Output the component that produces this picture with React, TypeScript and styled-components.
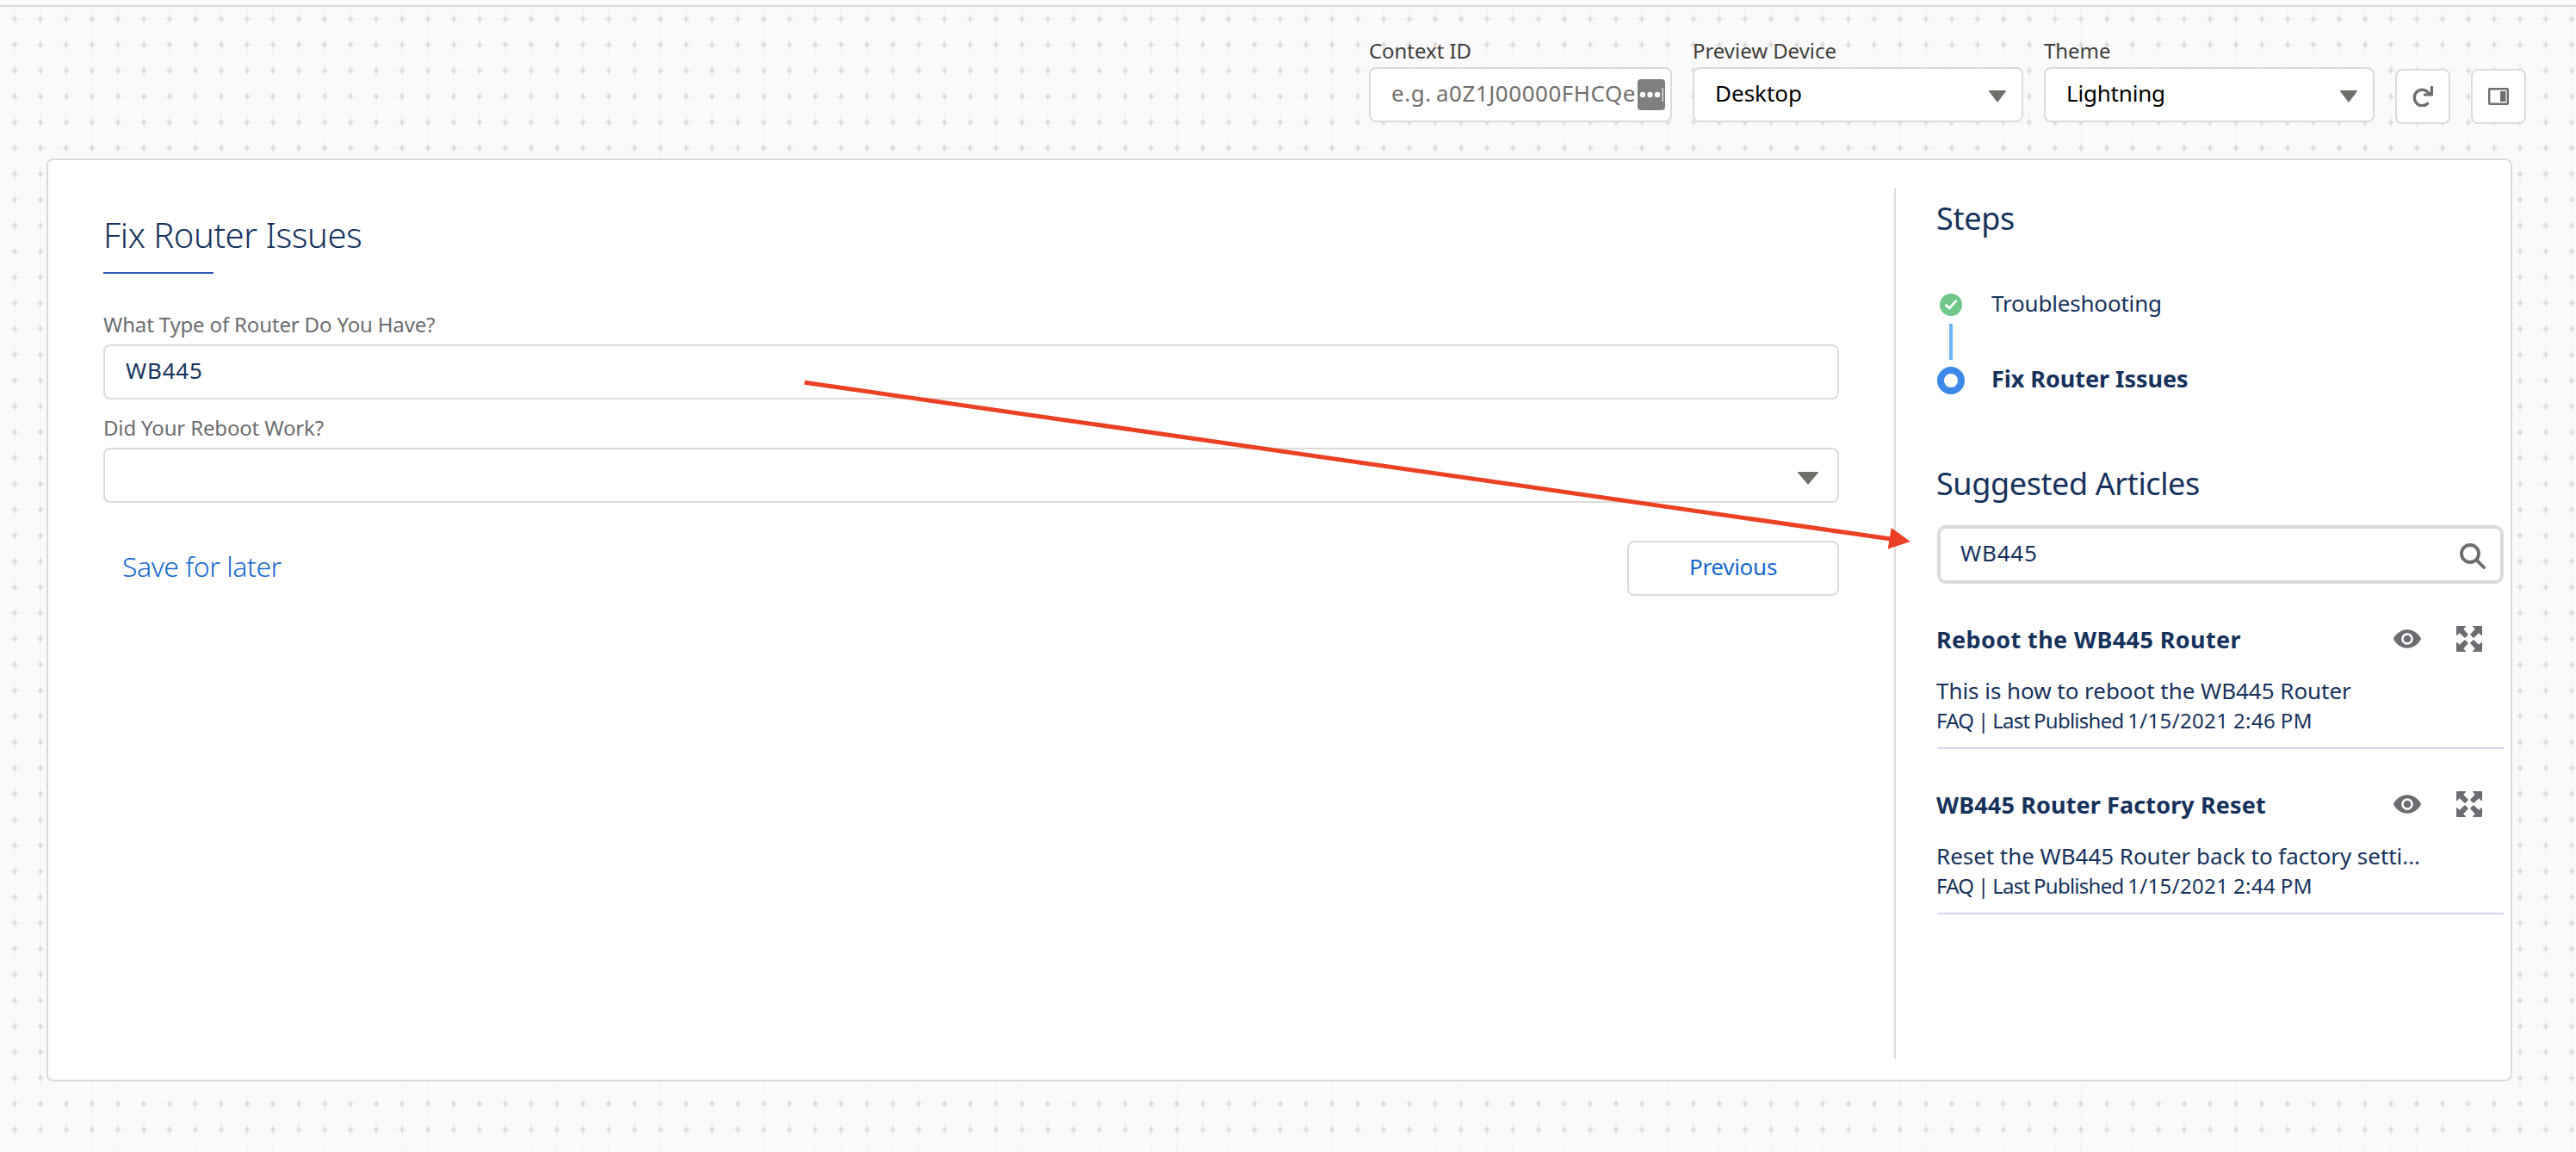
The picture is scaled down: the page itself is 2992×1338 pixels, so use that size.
import styled, { createGlobalStyle } from "styled-components";

const GlobalStyle = createGlobalStyle`
    * {
        box-sizing: border-box;
    }
    body {
        margin: 0;
        font-family: "Noto Sans", "Open Sans", sans-serif;
        color: #16325c;
    }
    h1, h2, h3, p, ul {
        margin: 0;
        padding: 0;
        font-weight: 400;
    }
    svg {
        display: block;
        flex-shrink: 0;
    }
`;

const Page = styled.div`
    position: relative;
    width: 2992px;
    height: 1338px;
    overflow: hidden;
    background-color: #fafafa;
    background-image:
        radial-gradient(ellipse 2.2px 5.5px at 17px 22px, #dadada 25%, transparent),
        radial-gradient(ellipse 5px 2.4px at 17px 22px, #e3e3e3 30%, transparent),
        linear-gradient(90deg, transparent 16px, #f7f7f7 16px, #f7f7f7 18px, transparent 18px),
        linear-gradient(transparent 21px, #f8f8f8 21px, #f8f8f8 23px, transparent 23px);
    background-size: 30px 30px;
`;

const TopStrip = styled.div`
    height: 8px;
    background: #fafaf9;
    border-bottom: 2px solid #dddbda;
`;

const Toolbar = styled.div`
    display: flex;
    justify-content: flex-end;
    align-items: flex-start;
    gap: 24px;
    height: 136px;
    padding: 32px 58px 0 0;
`;

const ToolbarField = styled.div<{ $width: number }>`
    width: ${props => props.$width}px;
`;

const ToolbarLabel = styled.div`
    font-size: 24px;
    line-height: 38px;
    letter-spacing: -0.05px;
    color: #3e3e3c;
    white-space: nowrap;
`;

const Control = styled.div<{ $color?: string; $tracking?: number; $right?: number }>`
    display: flex;
    align-items: center;
    justify-content: space-between;
    height: 64px;
    padding: 0 ${props => props.$right ?? 18}px 4px 24px;
    background: #fff;
    border: 2px solid #dddbda;
    border-radius: 8px;
    font-size: 26px;
    letter-spacing: ${props => props.$tracking ?? 0}px;
    color: ${props => props.$color ?? "#16325c"};
    white-space: nowrap;
`;

const Placeholder = styled.span`
    letter-spacing: 0.52px;
    word-spacing: -2px;
`;

const Caret = styled.svg<{ $drop: number }>`
    margin-top: ${props => props.$drop}px;
    margin-left: auto;
    fill: #706e6b;
`;

const MoreBadge = styled.svg`
    margin-top: 4px;
`;

const IconButton = styled.button`
    display: flex;
    align-items: center;
    justify-content: center;
    width: 64px;
    height: 64px;
    margin-top: 40px;
    padding: 0;
    background: #fff;
    border: 2px solid #dddbda;
    border-radius: 8px;
    color: #706e6b;
`;

const Panel = styled.main`
    display: flex;
    height: 1072px;
    margin: 40px 74px 0 54px;
    background: #fff;
    border: 2px solid #dddbda;
    border-radius: 8px;
`;

const Form = styled.section`
    flex: 1;
    padding: 62px 64px 0;
`;

const Title = styled.h1`
    font-size: 40px;
    font-weight: 300;
    line-height: 50px;
    letter-spacing: -0.45px;
    &::after {
        content: "";
        display: block;
        width: 128px;
        height: 2px;
        margin-top: 18px;
        background: #2a5db0;
    }
`;

const Field = styled.div<{ $gap: number }>`
    margin-top: ${props => props.$gap}px;
`;

const Label = styled.div`
    margin-bottom: 3px;
    font-size: 24px;
    line-height: 40px;
    letter-spacing: -0.16px;
    color: #6b6d70;
`;

const FormFooter = styled.div`
    display: flex;
    justify-content: space-between;
    margin-top: 44px;
`;

const SaveLink = styled.a`
    padding-left: 22px;
    font-size: 32px;
    font-weight: 300;
    line-height: 60px;
    letter-spacing: -0.45px;
    color: #1668cf;
`;

const PreviousButton = styled.button`
    width: 246px;
    height: 64px;
    padding: 0 0 4px;
    background: #fff;
    border: 2px solid #dddbda;
    border-radius: 8px;
    font-family: inherit;
    font-size: 26px;
    letter-spacing: -0.26px;
    color: #1668cf;
`;

const Sidebar = styled.aside`
    width: 716px;
    margin: 32px 0 24px;
    padding: 11px 8px 0 48px;
    border-left: 2px solid #dddbda;
`;

const SectionTitle = styled.h2<{ $tracking: number }>`
    font-size: 36px;
    line-height: 50px;
    letter-spacing: ${props => props.$tracking}px;
    text-indent: -1px;
`;

const StepList = styled.div`
    margin: 57px 0 77px;
`;

const Step = styled.div`
    display: flex;
    align-items: center;
    gap: 31px;
    height: 36px;
`;

const StepMark = styled.span`
    display: flex;
    justify-content: center;
    width: 32px;
`;

const StepRing = styled.span`
    width: 32px;
    height: 32px;
    border: 8px solid #3c88e8;
    border-radius: 50%;
`;

const StepName = styled.span<{ $active?: boolean }>`
    padding-bottom: ${props => props.$active ? 6 : 4}px;
    font-size: ${props => props.$active ? 27 : 26}px;
    font-weight: ${props => props.$active ? 700 : 400};
    letter-spacing: ${props => props.$active ? -0.05 : -0.19}px;
`;

const StepLine = styled.div`
    width: 4px;
    height: 42px;
    margin: 4px 0 6px 14px;
    background: #70b3fb;
`;

const SearchBox = styled.div`
    display: flex;
    align-items: center;
    justify-content: space-between;
    height: 64px;
    margin: 25px 2px 46px;
    padding: 0 17px 0 23px;
    border: 2px solid #d8dadc;
    border-radius: 8px;
    box-shadow: 0 0 0 2px #d8dbde;
    font-size: 26px;
    letter-spacing: 0.8px;
`;

const SearchText = styled.span`
    padding-bottom: 4px;
`;

const SearchIcon = styled.svg`
    margin-top: 4px;
`;

const Article = styled.article`
    margin-top: 44px;
    padding-bottom: 15px;
    border-bottom: 2px solid #d0d9e7;
    white-space: nowrap;
`;

const ArticleHead = styled.div`
    display: flex;
    align-items: center;
    height: 40px;
    padding-right: 25px;
`;

const ArticleTitle = styled.h3<{ $tracking: number }>`
    flex: 1;
    font-size: 27px;
    font-weight: 700;
    letter-spacing: ${props => props.$tracking}px;
    text-indent: -1px;
`;

const ArticleActions = styled.div`
    display: flex;
    align-items: center;
    gap: 41px;
`;

const Summary = styled.p`
    margin-top: 21px;
    font-size: 26px;
    line-height: 38px;
    letter-spacing: -0.04px;
    text-indent: -1px;
`;

const Meta = styled.p`
    font-size: 24px;
    line-height: 32px;
    letter-spacing: -0.75px;
    word-spacing: -0.8px;
    text-indent: -1px;
`;

const Published = styled.time`
    letter-spacing: 0.35px;
`;

const Pointer = styled.svg`
    position: absolute;
    top: 0;
    left: 0;
    pointer-events: none;
`;

const articles = [
    {
        title: "Reboot the WB445 Router",
        tracking: 0.38,
        summary: "This is how to reboot the WB445 Router",
        published: "1/15/2021 2:46 PM",
    },
    {
        title: "WB445 Router Factory Reset",
        tracking: 0.12,
        summary: "Reset the WB445 Router back to factory setti...",
        published: "1/15/2021 2:44 PM",
    },
];

function EyeIcon() {
    return (
        <svg width="32" height="32" viewBox="0 0 52 52" fill="#6b6d70">
            <path d="M51.8 25.1C47.1 15.6 37.3 8.5 26 8.5S4.9 15.6.2 25.1c-.3.6-.3 1.2 0 1.8C4.9 36.4 14.7 43.5 26 43.5s21.1-7.1 25.8-16.6c.3-.6.3-1.2 0-1.8zM26 37c-6.1 0-11-4.9-11-11s4.9-11 11-11 11 4.9 11 11-4.9 11-11 11z" />
            <circle cx="26" cy="26" r="7" />
        </svg>
    );
}

function ExpandIcon() {
    return (
        <svg width="30" height="30" viewBox="0 0 30 30" fill="#6b6d70">
            {[0, 90, 180, 270].map((angle) => (
                <path
                    key={angle}
                    transform={`rotate(${angle} 15 15)`}
                    d="M1 0H10.4Q11.4.3 10.8 1.1L8.3 3.8L13.6 9.4Q14 10 13.6 10.5L10.6 13.6Q10 14 9.4 13.6L3.8 8.3L1.1 10.8Q.3 11.4 0 10.4V1Q0 0 1 0Z"
                />
            ))}
        </svg>
    );
}

function App() {
    return (
        <>
            <GlobalStyle />
            <Page>
                <TopStrip />
                <Toolbar>
                    <ToolbarField $width={352}>
                        <ToolbarLabel>Context ID</ToolbarLabel>
                        <Control $color="#706e6b" $right={6}>
                            <Placeholder>e.g. a0Z1J00000FHCQe</Placeholder>
                            <MoreBadge width="32" height="36" viewBox="0 0 32 36">
                                <rect width="32" height="36" rx="4" fill="#7f7f7f" />
                                <circle cx="6" cy="18" r="3.2" fill="#fff" />
                                <circle cx="14.5" cy="18" r="3.2" fill="#fff" />
                                <circle cx="23" cy="18" r="3.2" fill="#fff" />
                                <rect x="28.4" y="10" width="1.6" height="16" fill="#d8d8d8" />
                            </MoreBadge>
                        </Control>
                    </ToolbarField>
                    <ToolbarField $width={384}>
                        <ToolbarLabel>Preview Device</ToolbarLabel>
                        <Control $color="#000">
                            Desktop
                            <Caret $drop={8} width="20" height="14" viewBox="0 0 20 14">
                                <path d="M.8 0H19.2Q20.4.2 19.7 1.2L10.6 13.2Q10 13.8 9.4 13.2L.3 1.2Q-.4.2.8 0Z" />
                            </Caret>
                        </Control>
                    </ToolbarField>
                    <ToolbarField $width={384}>
                        <ToolbarLabel>Theme</ToolbarLabel>
                        <Control $color="#000" $tracking={-0.2}>
                            Lightning
                            <Caret $drop={8} width="20" height="14" viewBox="0 0 20 14">
                                <path d="M.8 0H19.2Q20.4.2 19.7 1.2L10.6 13.2Q10 13.8 9.4 13.2L.3 1.2Q-.4.2.8 0Z" />
                            </Caret>
                        </Control>
                    </ToolbarField>
                    <IconButton aria-label="Refresh">
                        <svg width="24" height="24" viewBox="0 0 24 24">
                            <path d="M17.6 20.2A9 9.3 0 1 1 19 8.6" fill="none" stroke="currentColor" strokeWidth="3.4" strokeLinecap="round" />
                            <path d="M21.4 0H23.4Q24 0 24 .7V10.6Q24 11.5 23.2 11.5H13.6Q13 11.5 13 10.9V9.2Q13 8.6 13.6 8.6H17.5L20.8 6.8V.7Q20.8 0 21.4 0Z" fill="currentColor" />
                        </svg>
                    </IconButton>
                    <IconButton aria-label="Toggle panel">
                        <svg width="24" height="20" viewBox="0 0 24 20">
                            <rect x="1.2" y="1.2" width="21.6" height="17.6" rx=".6" fill="none" stroke="currentColor" strokeWidth="2.4" />
                            <rect x="14" y="4" width="6.4" height="12" fill="currentColor" />
                        </svg>
                    </IconButton>
                </Toolbar>

                <Panel>
                    <Form>
                        <Title>Fix Router Issues</Title>
                        <Field $gap={39}>
                            <Label>What Type of Router Do You Have?</Label>
                            <Control $tracking={0.8}>WB445</Control>
                        </Field>
                        <Field $gap={13}>
                            <Label>Did Your Reboot Work?</Label>
                            <Control $right={22}>
                                <Caret $drop={11} width="24" height="15" viewBox="0 0 24 15">
                                    <path d="M.8 0H23.2Q24.4.2 23.7 1.2L12.6 14.2Q12 14.8 11.4 14.2L.3 1.2Q-.4.2.8 0Z" />
                                </Caret>
                            </Control>
                        </Field>
                        <FormFooter>
                            <SaveLink>Save for later</SaveLink>
                            <PreviousButton>Previous</PreviousButton>
                        </FormFooter>
                    </Form>

                    <Sidebar>
                        <SectionTitle $tracking={-0.3}>Steps</SectionTitle>
                        <StepList>
                            <Step>
                                <StepMark>
                                    <svg width="26" height="26" viewBox="0 0 26 26">
                                        <circle cx="13" cy="13" r="13" fill="#6fc78a" />
                                        <path d="M7.4 13.6L11.2 17L18.8 8.8" fill="none" stroke="#fff" strokeWidth="2.8" strokeLinecap="round" />
                                    </svg>
                                </StepMark>
                                <StepName>Troubleshooting</StepName>
                            </Step>
                            <StepLine />
                            <Step>
                                <StepMark><StepRing /></StepMark>
                                <StepName $active>Fix Router Issues</StepName>
                            </Step>
                        </StepList>

                        <SectionTitle $tracking={-0.39}>Suggested Articles</SectionTitle>
                        <SearchBox>
                            <SearchText>WB445</SearchText>
                            <SearchIcon width="30" height="30" viewBox="0 0 30 30" fill="none" stroke="#6b6d70">
                                <circle cx="12" cy="12" r="10" strokeWidth="3.8" />
                                <path d="M19.4 19.4L28 28" strokeWidth="3.8" strokeLinecap="round" />
                            </SearchIcon>
                        </SearchBox>
                        {articles.map((article) => (
                            <Article key={article.title}>
                                <ArticleHead>
                                    <ArticleTitle $tracking={article.tracking}>{article.title}</ArticleTitle>
                                    <ArticleActions>
                                        <EyeIcon />
                                        <ExpandIcon />
                                    </ArticleActions>
                                </ArticleHead>
                                <Summary>{article.summary}</Summary>
                                <Meta>
                                    FAQ | Last Published <Published>{article.published}</Published>
                                </Meta>
                            </Article>
                        ))}
                    </Sidebar>
                </Panel>

                <Pointer width="2992" height="1338" viewBox="0 0 2992 1338">
                    <path d="M934.5 444.3L2198 626.3" stroke="#ec4024" strokeWidth="5" />
                    <path d="M2196.7 613L2218.8 629L2192.7 637.8Z" fill="#ec4024" />
                </Pointer>
            </Page>
        </>
    );
}

export default App;
